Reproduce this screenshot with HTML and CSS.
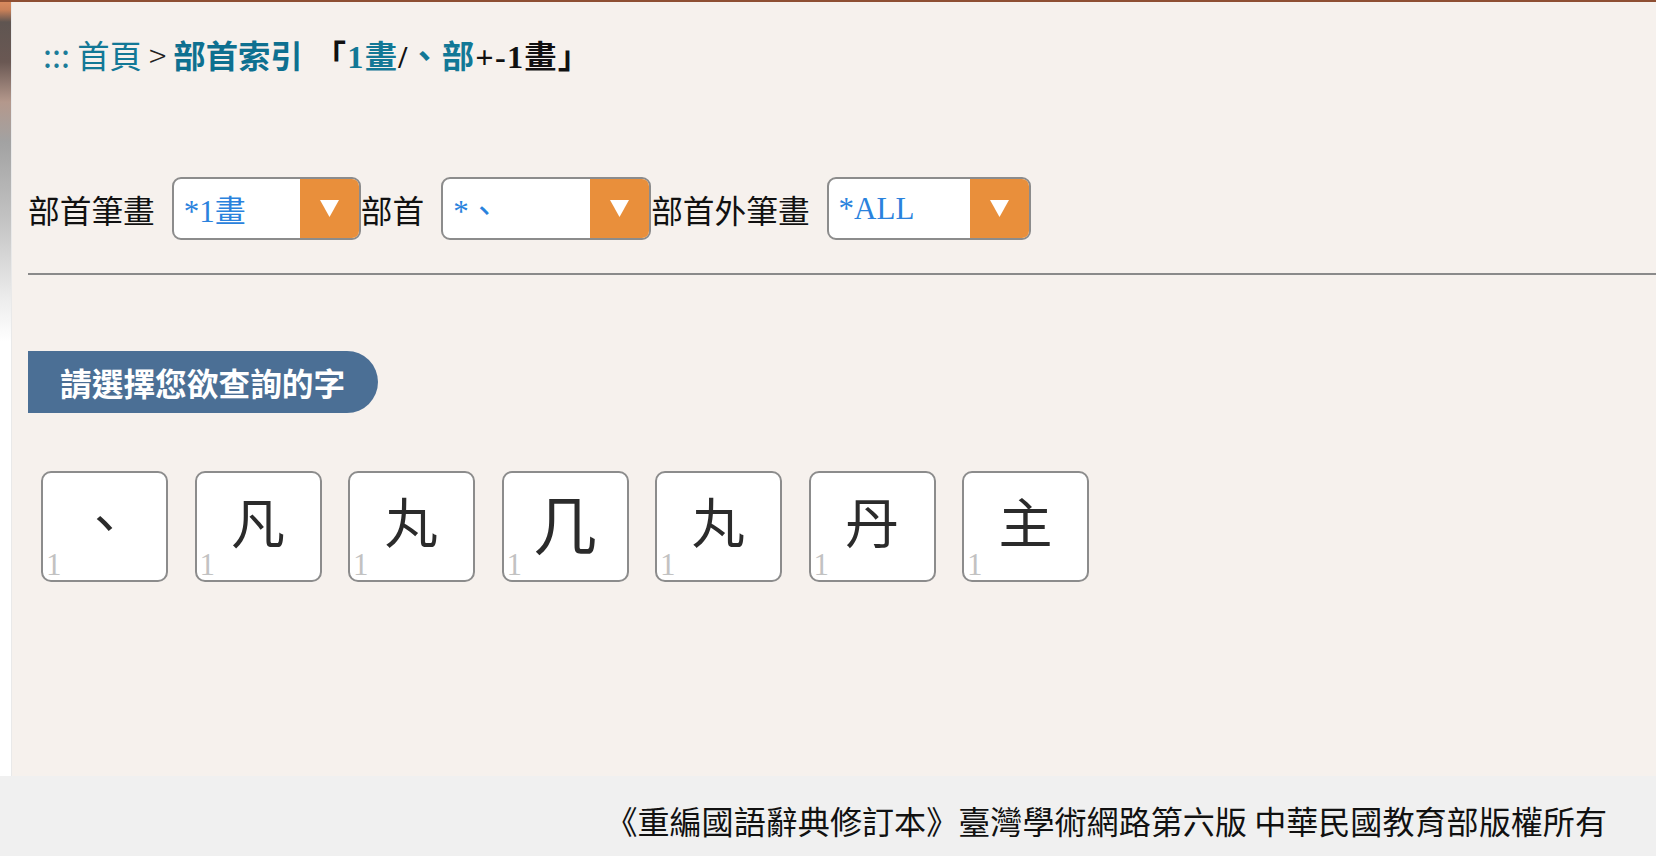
FILE: index.html
```html
<!DOCTYPE html>
<html lang="zh-Hant">
<head>
<meta charset="utf-8">
<title>部首索引</title>
<link rel="stylesheet" href="styles.css">
</head>
<body>
<div class="page">
  <div class="side"></div>
  <main class="main">
    <nav class="crumb">
      <span class="dots">:::</span> <a class="home">首頁</a><span class="gt"> &gt; </span><a class="cur">部首索引</a> <span class="sub"><span class="blk">「</span><span class="tl">1畫</span><span class="blk">/</span><span class="tl">、部</span><span class="blk">+-1畫」</span></span>
    </nav>
    <form class="filters">
      <label class="lbl">部首筆畫</label>
      <div class="sel s1"><span class="val">*1畫</span><span class="btn"><svg width="19" height="17" viewBox="0 0 19 17"><polygon points="0,0 19,0 9.5,17" fill="#fff"/></svg></span></div>
      <label class="lbl">部首</label>
      <div class="sel s2"><span class="val">*、</span><span class="btn"><svg width="19" height="17" viewBox="0 0 19 17"><polygon points="0,0 19,0 9.5,17" fill="#fff"/></svg></span></div>
      <label class="lbl">部首外筆畫</label>
      <div class="sel s3"><span class="val">*ALL</span><span class="btn"><svg width="19" height="17" viewBox="0 0 19 17"><polygon points="0,0 19,0 9.5,17" fill="#fff"/></svg></span></div>
    </form>
    <hr class="rule">
    <h2 class="pill">請選擇您欲查詢的字</h2>
    <ul class="tiles">
      <li class="tile"><span class="ch">、</span><span class="num">1</span></li>
      <li class="tile"><span class="ch">凡</span><span class="num">1</span></li>
      <li class="tile"><span class="ch">丸</span><span class="num">1</span></li>
      <li class="tile"><span class="ch big">几</span><span class="num">1</span></li>
      <li class="tile"><span class="ch">丸</span><span class="num">1</span></li>
      <li class="tile"><span class="ch">丹</span><span class="num">1</span></li>
      <li class="tile"><span class="ch">主</span><span class="num">1</span></li>
    </ul>
  </main>
</div>
<footer class="foot">《重編國語辭典修訂本》臺灣學術網路第六版 中華民國教育部版權所有</footer>
</body>
</html>
```

FILE: styles.css
```css
* { box-sizing: border-box; }
html, body { margin: 0; padding: 0; }
body {
  background: #f0f0f0;
  font-family: "Noto Sans CJK TC", "Noto Sans", sans-serif;
  color: #111;
}
.page {
  display: grid;
  grid-template-columns: 12px 1fr;
  height: 776px;
  border-top: 2px solid #8e4f33;
}
.side {
  background: linear-gradient(to bottom, #d98a5e 0, #c98058 8px, #5f5551 20px, #6a5853 60px, #b4988c 100px, #a2a2a2 140px, #c4c4c4 220px, #eeeeee 300px, #ffffff 340px, #ffffff 100%);
  border-right: 1px solid #e9e9e9;
}
.main {
  background: #f6f1ed;
  padding: 0 0 0 16px;
}
.crumb {
  margin-top: 32px;
  padding-left: 15px;
  font-size: 32.3px;
  line-height: 40px;
  color: #127896;
  white-space: nowrap;
}
.crumb .dots { color: #1b7c99; }
.crumb .home { color: #127896; }
.crumb .gt { color: #222; font-weight: 300; }
.crumb .cur { font-weight: bold; color: #0e7090; }
.crumb .sub {
  font-family: "Liberation Serif", "Noto Sans CJK TC", serif;
  font-weight: bold;
  letter-spacing: 1.2px;
  margin-left: 4px;
}
.crumb .blk { color: #111; }
.crumb .tl { color: #127896; }
.filters {
  margin: 100px 0 0;
  display: flex;
  align-items: center;
  height: 63px;
}
.lbl {
  font-size: 31.7px;
  line-height: 40px;
  margin-right: 17px;
  white-space: nowrap;
}
.sel {
  display: flex;
  height: 63px;
  border: 2px solid #8c8c8c;
  border-radius: 9px;
  background: #fff;
  overflow: hidden;
}
.s1 { width: 189px; }
.s2 { width: 210px; }
.s3 { width: 204px; }
.val {
  flex: 1;
  display: flex;
  align-items: center;
  padding-left: 10px;
  font-family: "Liberation Serif", "Noto Sans CJK TC", serif;
  font-size: 31px;
  color: #2a82dd;
}
.btn {
  width: 59px;
  background: #e98f3b;
  display: flex;
  align-items: center;
  justify-content: center;
}
.rule {
  margin: 33px 0 0;
  border: 0;
  height: 2px;
  background: #8a8a8a;
}
.pill {
  margin: 76px 0 0;
  display: inline-flex;
  align-items: center;
  height: 62px;
  padding: 0 33px 0 32px;
  background: #4b6f95;
  color: #fff;
  font-size: 31.7px;
  font-weight: bold;
  border-radius: 0 31px 31px 0;
}
.tiles {
  list-style: none;
  margin: 58px 0 0;
  padding: 0 0 0 13px;
  display: flex;
  gap: 26.5px;
}
.tile {
  position: relative;
  width: 127px;
  height: 111px;
  background: #fff;
  border: 2px solid #8c8c8c;
  border-radius: 10px;
  display: flex;
  align-items: center;
  justify-content: center;
}
.ch {
  font-size: 54px;
  line-height: 1;
  color: #2b2b2b;
  margin-bottom: 12px;
}
.ch.big { font-size: 64px; }
.num {
  position: absolute;
  left: 3px;
  bottom: 0;
  font-family: "Liberation Serif", serif;
  font-size: 31px;
  line-height: 1;
  color: #c2c2c2;
}
.foot {
  height: 80px;
  padding: 24px 49px 0 0;
  text-align: right;
  font-size: 32.1px;
  line-height: 40px;
  color: #111;
  white-space: nowrap;
}
```
